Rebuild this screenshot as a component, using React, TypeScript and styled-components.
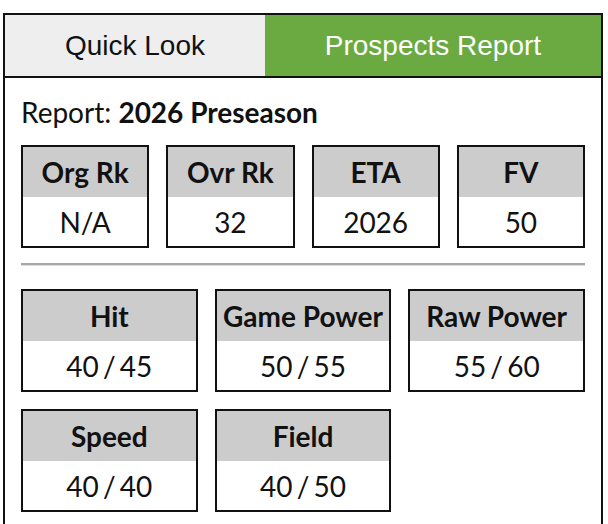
import styled, { createGlobalStyle } from 'styled-components';

const GlobalStyle = createGlobalStyle`
  html, body {
    margin: 0;
    padding: 0;
    background: #fff;
  }
  body {
    font-family: Lato, 'Open Sans', sans-serif;
    color: #111;
  }
`;

const Page = styled.div`
  padding: 13px 0 0 3px;
  height: 524px;
  box-sizing: border-box;
  overflow: hidden;
`;

const Frame = styled.div`
  width: 600px;
  min-height: 540px;
  box-sizing: border-box;
  border: 2px solid #111;
`;

const Tabs = styled.div`
  display: flex;
  height: 63px;
  box-sizing: border-box;
  border-bottom: 2px solid #111;
`;

const Tab = styled.div<{ $active?: boolean }>`
  flex: 1 1 auto;
  display: flex;
  align-items: center;
  justify-content: center;
  font-family: 'Liberation Sans', Arial, sans-serif;
  font-size: 28px;
  background: ${(p) => (p.$active ? '#6aaa40' : '#eeeeee')};
  color: ${(p) => (p.$active ? '#fff' : '#111')};
`;

const Body = styled.div`
  padding: 20px 16px 0;
`;

const ReportLine = styled.div`
  font-size: 28px;
  line-height: 28px;
  margin-bottom: 19px;

  b {
    font-weight: 700;
  }
`;

const Grid = styled.div<{ $cols: number }>`
  display: grid;
  grid-template-columns: repeat(${(p) => p.$cols}, 1fr);
  gap: 17px;
`;

const StatBox = styled.div`
  border: 2px solid #111;
  text-align: center;
`;

const StatLabel = styled.div`
  height: 50px;
  display: flex;
  align-items: center;
  justify-content: center;
  background: #cccccc;
  font-size: 28px;
  font-weight: 700;
  white-space: nowrap;
`;

const StatValue = styled.div`
  height: 49px;
  display: flex;
  align-items: center;
  justify-content: center;
  font-size: 28px;
  word-spacing: -3px;
`;

const Divider = styled.hr`
  margin: 15px 0 23px;
  border: none;
  border-top: 2px solid #a8a8a8;
  border-bottom: 1px solid #dcdcdc;
  height: 0;
`;

const topStats = [
  { label: 'Org Rk', value: 'N/A' },
  { label: 'Ovr Rk', value: '32' },
  { label: 'ETA', value: '2026' },
  { label: 'FV', value: '50' },
];

const tools = [
  { label: 'Hit', value: '40 / 45' },
  { label: 'Game Power', value: '50 / 55' },
  { label: 'Raw Power', value: '55 / 60' },
  { label: 'Speed', value: '40 / 40' },
  { label: 'Field', value: '40 / 50' },
];

export default function App() {
  return (
    <Page>
      <GlobalStyle />
      <Frame>
        <Tabs>
          <Tab>Quick Look</Tab>
          <Tab $active>Prospects Report</Tab>
        </Tabs>
        <Body>
          <ReportLine>
            Report: <b>2026 Preseason</b>
          </ReportLine>
          <Grid $cols={4}>
            {topStats.map((s) => (
              <StatBox key={s.label}>
                <StatLabel>{s.label}</StatLabel>
                <StatValue>{s.value}</StatValue>
              </StatBox>
            ))}
          </Grid>
          <Divider />
          <Grid $cols={3}>
            {tools.map((t) => (
              <StatBox key={t.label}>
                <StatLabel>{t.label}</StatLabel>
                <StatValue>{t.value}</StatValue>
              </StatBox>
            ))}
          </Grid>
        </Body>
      </Frame>
    </Page>
  );
}
